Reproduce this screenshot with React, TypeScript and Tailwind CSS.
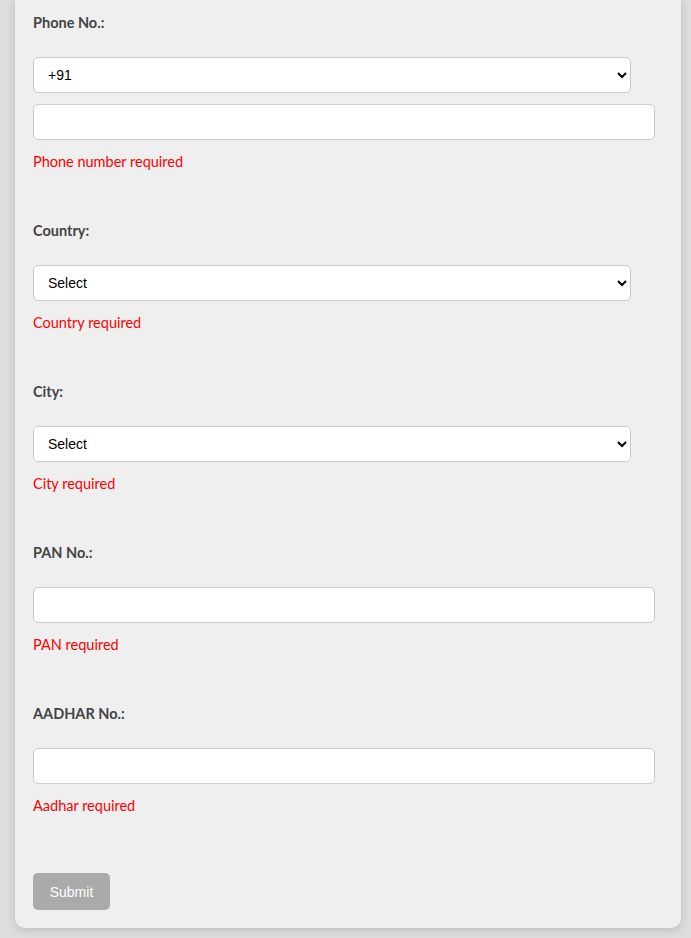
import { useState } from "react";

type FieldProps = {
  label: string;
  error: string;
  children: React.ReactNode;
};

const Field = ({ label, error, children }: FieldProps) => {
  return (
    <div className="flex flex-col">
      <label className="block text-[14.5px] font-bold leading-5 text-[#444]">{label}</label>
      <div className="mt-6 flex flex-col gap-[11px]">{children}</div>
      <div className="mt-3 text-[14.5px] leading-5 text-[#ff0000]">{error}</div>
    </div>
  );
};

const selectCls =
  "h-9 w-[598px] rounded-[5px] border border-[#ccc] bg-white pl-[10px] pr-2 text-sm text-black font-['Liberation_Sans',Arial,sans-serif] outline-none";
const inputCls =
  "h-9 w-[622px] rounded-[5px] border border-[#ccc] bg-white px-[10px] text-sm text-black font-['Liberation_Sans',Arial,sans-serif] outline-none";

const App = () => {
  const [code, setCode] = useState("+91");

  return (
    <div className="min-h-[938px] bg-[#dddddd] pl-[15px] pr-[10px] pb-[11px] font-['Lato','Open_Sans',sans-serif]">
      <div className="flex flex-col gap-[49px] rounded-b-[10px] bg-[#efefef] px-[18px] pb-[18px] pt-[13px] shadow-[0_2px_8px_rgba(0,0,0,0.15)]">
        <Field label="Phone No.:" error="Phone number required">
          <select className={selectCls} value={code} onChange={(e) => setCode(e.target.value)}>
            <option value="+91">+91</option>
            <option value="+1">+1</option>
            <option value="+44">+44</option>
          </select>
          <input type="text" className={inputCls} />
        </Field>
        <Field label="Country:" error="Country required">
          <select className={selectCls} defaultValue="">
            <option value="">Select</option>
            <option value="in">India</option>
          </select>
        </Field>
        <Field label="City:" error="City required">
          <select className={selectCls} defaultValue="">
            <option value="">Select</option>
          </select>
        </Field>
        <Field label="PAN No.:" error="PAN required">
          <input type="text" className={inputCls} />
        </Field>
        <Field label="AADHAR No.:" error="Aadhar required">
          <input type="text" className={inputCls} />
        </Field>
        <div className="pt-2">
          <button
            type="button"
            disabled
            className="h-[37px] w-[77px] rounded-[5px] bg-[#aaaaaa] text-sm text-white font-['Liberation_Sans',Arial,sans-serif]"
          >
            Submit
          </button>
        </div>
      </div>
    </div>
  );
};

export default App;
